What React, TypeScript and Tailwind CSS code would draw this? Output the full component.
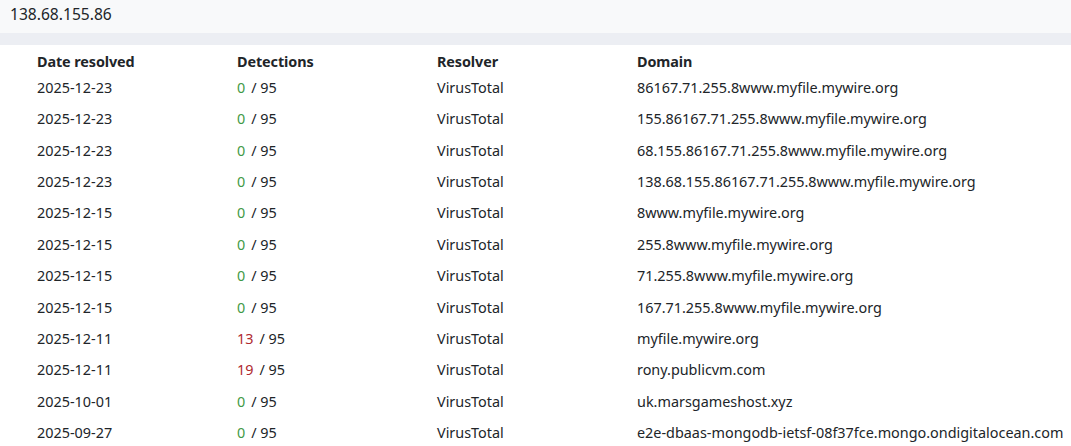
const rows: [string, number, string][] = [
  ['2025-12-23', 0, '86167.71.255.8www.myfile.mywire.org'],
  ['2025-12-23', 0, '155.86167.71.255.8www.myfile.mywire.org'],
  ['2025-12-23', 0, '68.155.86167.71.255.8www.myfile.mywire.org'],
  ['2025-12-23', 0, '138.68.155.86167.71.255.8www.myfile.mywire.org'],
  ['2025-12-15', 0, '8www.myfile.mywire.org'],
  ['2025-12-15', 0, '255.8www.myfile.mywire.org'],
  ['2025-12-15', 0, '71.255.8www.myfile.mywire.org'],
  ['2025-12-15', 0, '167.71.255.8www.myfile.mywire.org'],
  ['2025-12-11', 13, 'myfile.mywire.org'],
  ['2025-12-11', 19, 'rony.publicvm.com'],
  ['2025-10-01', 0, 'uk.marsgameshost.xyz'],
  ['2025-09-27', 0, 'e2e-dbaas-mongodb-ietsf-08f37fce.mongo.ondigitalocean.com'],
];

export default function App() {
  return (
    <div className="w-[1071px] h-[446px] overflow-hidden bg-white text-[14.4px] text-[#212529] font-['Noto_Sans',sans-serif]">
      <div className="h-[33px] bg-[#f8f9fa] px-[10px] pt-[3px] text-[15.6px] leading-[22px]">138.68.155.86</div>
      <div className="h-[12px] bg-[#eceef3]" />
      <div className="px-[37px] pt-[6px]">
        <div className="grid grid-cols-[200px_200px_200px_1fr] h-[21px] items-center font-bold tracking-[-0.1px]">
          <div>Date resolved</div>
          <div>Detections</div>
          <div>Resolver</div>
          <div>Domain</div>
        </div>
        {rows.map(([date, det, domain], i) => (
          <div key={i} className="grid grid-cols-[200px_200px_200px_1fr] h-[31.4px] items-center">
            <div>{date}</div>
            <div>
              <span className={det > 0 ? 'text-[#b02a30] mr-[6px]' : 'text-[#3f9a46] mr-[6px]'}>{det}</span>
              <span>/ 95</span>
            </div>
            <div>VirusTotal</div>
            <div className="whitespace-nowrap">{domain}</div>
          </div>
        ))}
      </div>
    </div>
  );
}
